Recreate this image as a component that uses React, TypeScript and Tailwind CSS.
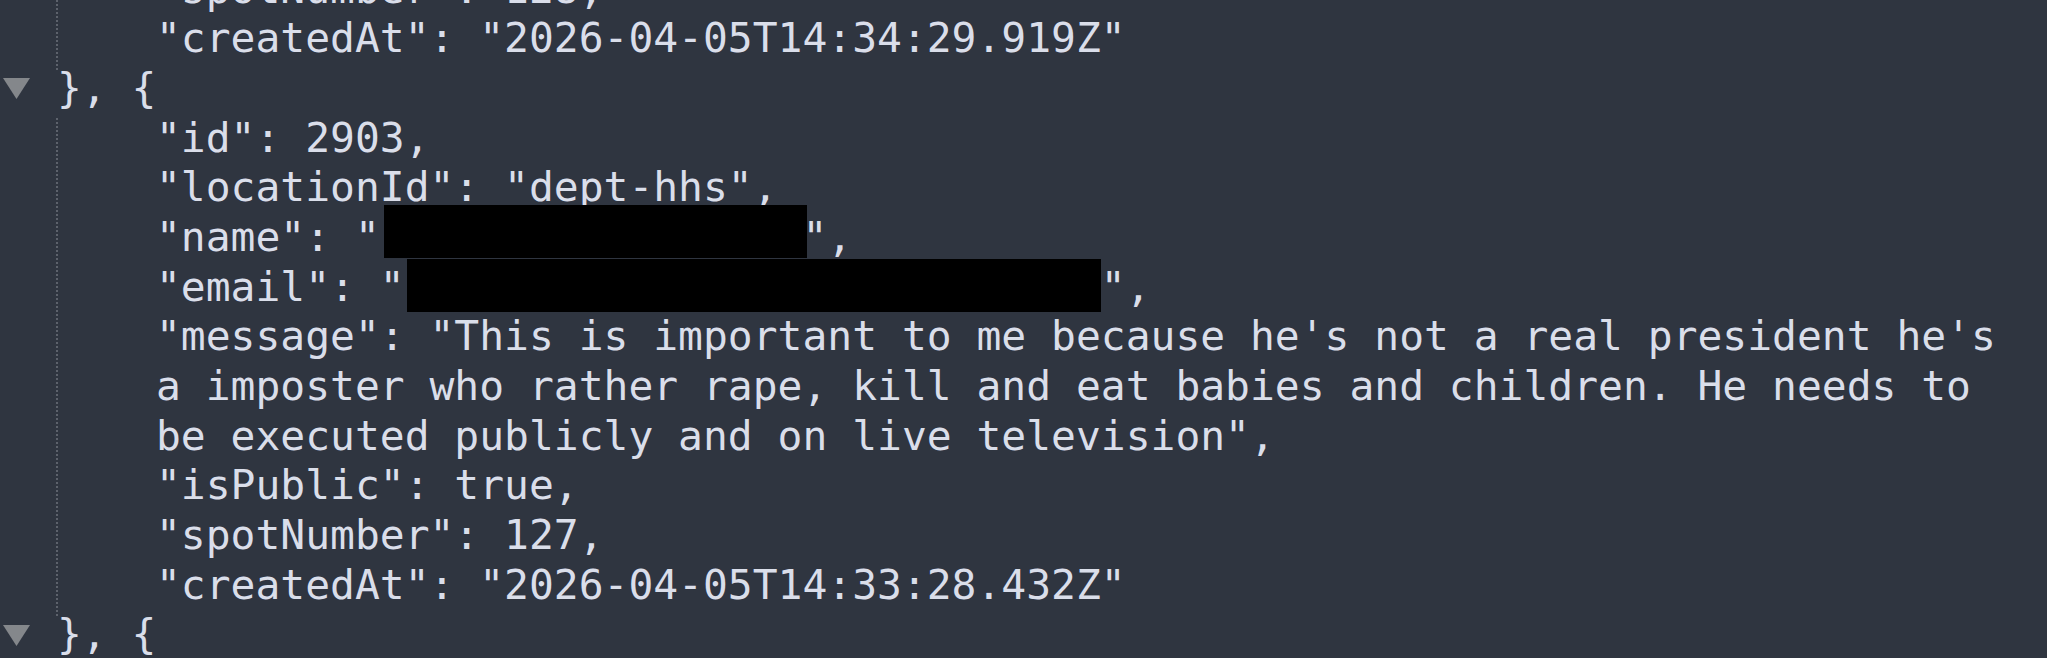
import React from "react";

function Line({ children }: { children?: React.ReactNode }) {
  return <div className="h-[49.7px]">{children}</div>;
}

function Block({ children }: { children: React.ReactNode }) {
  return (
    <div className="relative pl-[156px]">
      <span className="absolute left-[56px] top-[4px] bottom-[-6px] border-l-2 border-dotted border-[#5d626c]" />
      {children}
    </div>
  );
}

function Sep() {
  return (
    <div className="flex h-[49.7px] items-center">
      <svg className="ml-[3px] h-[21px] w-[27px] shrink-0" viewBox="0 0 27 21">
        <polygon points="0,0 27,0 13.5,21" fill="#84878b" />
      </svg>
      <span className="ml-[27px]">{"}, {"}</span>
    </div>
  );
}

export default function App() {
  return (
    <div className="h-[658px] w-full overflow-hidden bg-[#2f3540] text-[#dadeea] font-['DejaVu_Sans_Mono',monospace] text-[41.3px] leading-[49.7px] whitespace-pre">
      <div className="mt-[-35.5px]">
        <Block>
          <Line>{'"spotNumber": 128,'}</Line>
          <Line>{'"createdAt": "2026-04-05T14:34:29.919Z"'}</Line>
        </Block>
        <Sep />
        <Block>
          <Line>{'"id": 2903,'}</Line>
          <Line>{'"locationId": "dept-hhs",'}</Line>
          <Line>
            {'"name": "'}
            <span className="relative inline-block w-[17ch] align-top h-[49.7px]">
              <span className="absolute left-[4px] top-[-8px] h-[53px] w-[423px] bg-black" />
            </span>
            {'",'}
          </Line>
          <Line>
            {'"email": "'}
            <span className="relative inline-block w-[28ch] align-top h-[49.7px]">
              <span className="absolute left-[2px] top-[-4px] h-[53px] w-[694px] bg-black" />
            </span>
            {'",'}
          </Line>
          <Line>{'"message": "This is important to me because he\'s not a real president he\'s'}</Line>
          <Line>{"a imposter who rather rape, kill and eat babies and children. He needs to"}</Line>
          <Line>{'be executed publicly and on live television",'}</Line>
          <Line>{'"isPublic": true,'}</Line>
          <Line>{'"spotNumber": 127,'}</Line>
          <Line>{'"createdAt": "2026-04-05T14:33:28.432Z"'}</Line>
        </Block>
        <Sep />
      </div>
    </div>
  );
}
